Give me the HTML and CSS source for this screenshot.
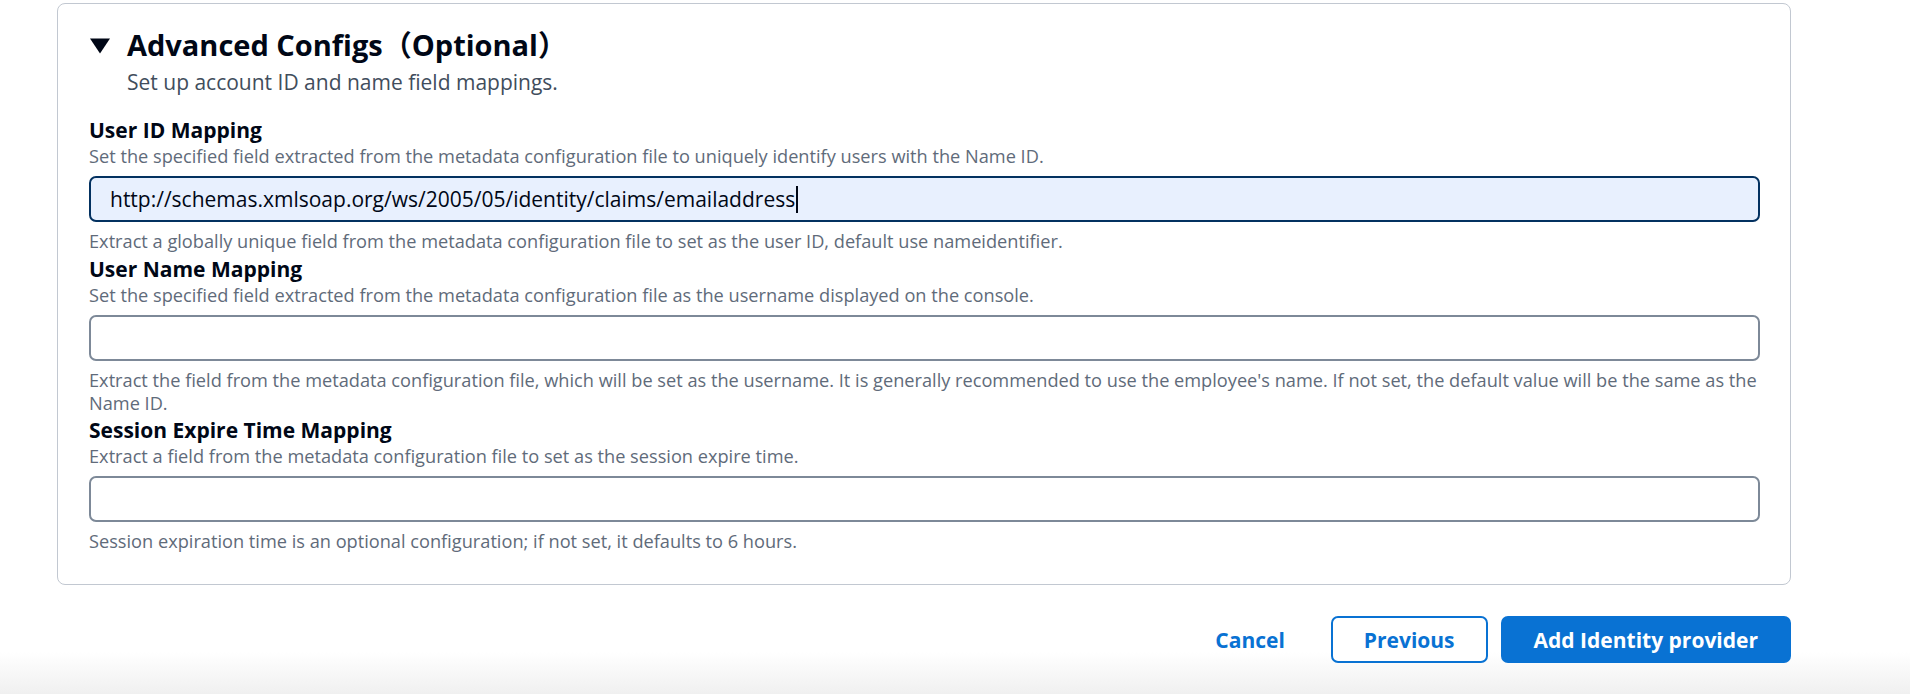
FILE: index.html
```html
<!DOCTYPE html>
<html lang="en">
<head>
<meta charset="utf-8">
<title>Advanced Configs</title>
<link rel="stylesheet" href="styles.css">
</head>
<body>
<div class="page">
  <section class="card">
    <div class="card-header">
      <svg class="caret-icon" width="20" height="16" viewBox="0 0 20 16" aria-hidden="true">
        <polygon points="0,0.5 20,0.5 10,15.5" fill="#000716"/>
      </svg>
      <div class="header-text">
        <h2 class="title">Advanced Configs（Optional）</h2>
        <p class="subtitle">Set up account ID and name field mappings.</p>
      </div>
    </div>

    <div class="field first">
      <div class="label">User ID Mapping</div>
      <div class="desc">Set the specified field extracted from the metadata configuration file to uniquely identify users with the Name ID.</div>
      <div class="input focused"><span class="value">http://schemas.xmlsoap.org/ws/2005/05/identity/claims/emailaddress</span><span class="text-caret"></span></div>
      <div class="hint">Extract a globally unique field from the metadata configuration file to set as the user ID, default use nameidentifier.</div>
    </div>

    <div class="field">
      <div class="label">User Name Mapping</div>
      <div class="desc">Set the specified field extracted from the metadata configuration file as the username displayed on the console.</div>
      <div class="input"></div>
      <div class="hint">Extract the field from the metadata configuration file, which will be set as the username. It is generally recommended to use the employee's name. If not set, the default value will be the same as the Name ID.</div>
    </div>

    <div class="field">
      <div class="label">Session Expire Time Mapping</div>
      <div class="desc">Extract a field from the metadata configuration file to set as the session expire time.</div>
      <div class="input"></div>
      <div class="hint">Session expiration time is an optional configuration; if not set, it defaults to 6 hours.</div>
    </div>
  </section>

  <div class="actions">
    <button class="btn btn-link">Cancel</button>
    <button class="btn btn-normal">Previous</button>
    <button class="btn btn-primary">Add Identity provider</button>
  </div>
</div>
</body>
</html>
```

FILE: styles.css
```css
html {
  min-height: 100%;
  background: linear-gradient(to bottom, #ffffff 0, #ffffff 652px, #f0f0f0 694px);
}

body {
  margin: 0;
  font-family: "Open Sans", "Noto Sans", "Noto Sans CJK SC", sans-serif;
  color: #000716;
}

.page {
  padding: 3px 119px 0 57px;
}

.card {
  box-sizing: border-box;
  border: 1px solid #c2c8d1;
  border-radius: 8px;
  padding: 21px 30px 31px 31px;
  background: #ffffff;
}

.card-header {
  display: flex;
  align-items: flex-start;
}

.caret-icon {
  flex: none;
  margin: 13px 17px 0 1px;
}

.header-text {
  display: flex;
  flex-direction: column;
}

.title {
  margin: 0;
  font-size: 29px;
  line-height: 40px;
  font-weight: 700;
  color: #000716;
}

.subtitle {
  margin: 3px 0 0;
  font-size: 21px;
  line-height: 28px;
  color: #414d5c;
}

.field {
  margin-top: 2.5px;
}

.field.first {
  margin-top: 21px;
}

.label {
  font-size: 21px;
  line-height: 26px;
  font-weight: 700;
  color: #000716;
}

.desc,
.hint {
  font-size: 18.2px;
  line-height: 23px;
  color: #5f6b7a;
}

.desc {
  margin-top: 2px;
}

.input {
  box-sizing: border-box;
  margin-top: 8px;
  height: 46px;
  border: 2px solid #7d8998;
  border-radius: 7px;
  background: #ffffff;
  display: flex;
  align-items: center;
  padding: 0 19px;
  font-size: 21px;
  color: #000716;
}

.input.focused {
  border-color: #033160;
  background: #e8f0fe;
}

.text-caret {
  display: inline-block;
  width: 2px;
  height: 27px;
  background: #000716;
  margin-left: 1px;
}

.hint {
  margin-top: 8px;
}

.actions {
  display: flex;
  justify-content: flex-end;
  gap: 13px;
  margin-top: 31px;
}

.btn {
  box-sizing: border-box;
  height: 47px;
  padding: 0 31px;
  border: 2px solid transparent;
  border-radius: 7px;
  font-family: "Open Sans", "Noto Sans", sans-serif;
  font-size: 21px;
  font-weight: 700;
  background: transparent;
  color: #0972d3;
  cursor: pointer;
}

.btn-normal {
  border-color: #0972d3;
  background: #ffffff;
}

.btn-primary {
  background: #0972d3;
  border-color: #0972d3;
  color: #ffffff;
}
```
